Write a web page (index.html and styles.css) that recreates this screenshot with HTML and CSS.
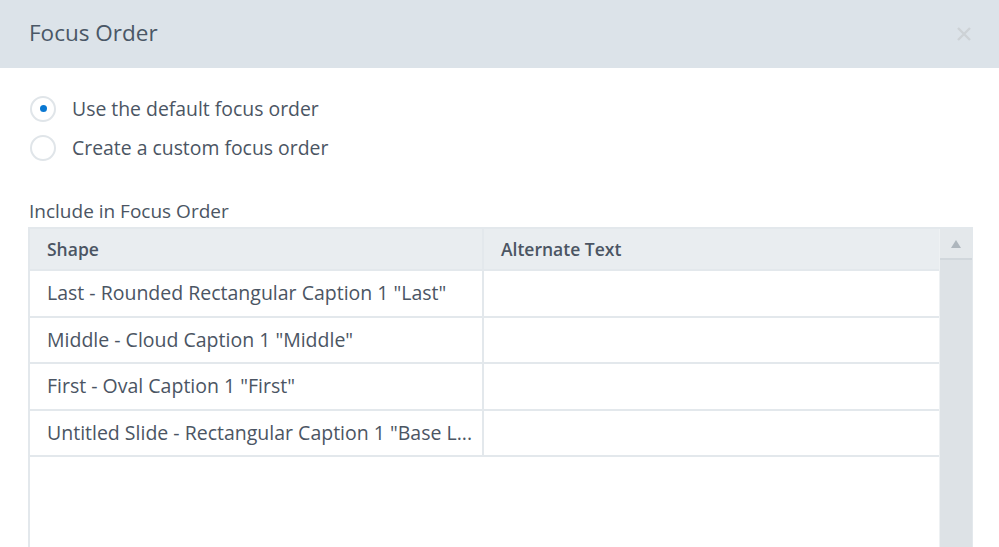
FILE: index.html
```html
<!DOCTYPE html>
<html lang="en">

<head>
    <meta charset="UTF-8">
    <meta name="viewport" content="width=device-width, initial-scale=1.0">
    <title>Focus Order</title>
    <link rel="stylesheet" href="styles.css">
</head>

<body>
    <div class="dialog">
        <div class="head">
            <h1 class="title">Focus Order</h1>
            <svg class="close" width="14" height="14" viewBox="0 0 14 14">
                <path d="M1 1L13 13M13 1L1 13" stroke="#cdd2d6" stroke-width="2.4" fill="none" />
            </svg>
        </div>

        <div class="content">
            <ul class="options">
                <li class="option">
                    <span class="radio checked"></span>
                    <span>Use the default focus order</span>
                </li>
                <li class="option">
                    <span class="radio"></span>
                    <span>Create a custom focus order</span>
                </li>
            </ul>

            <p class="label">Include in Focus Order</p>

            <div class="grid">
                <div class="rows">
                    <div class="row head-row">
                        <div class="cell shape">Shape</div>
                        <div class="cell alt">Alternate Text</div>
                    </div>
                    <div class="row">
                        <div class="cell shape">Last - Rounded Rectangular Caption 1 "Last"</div>
                        <div class="cell alt"></div>
                    </div>
                    <div class="row">
                        <div class="cell shape">Middle - Cloud Caption 1 "Middle"</div>
                        <div class="cell alt"></div>
                    </div>
                    <div class="row">
                        <div class="cell shape">First - Oval Caption 1 "First"</div>
                        <div class="cell alt"></div>
                    </div>
                    <div class="row">
                        <div class="cell shape">Untitled Slide - Rectangular Caption 1 "Base L...</div>
                        <div class="cell alt"></div>
                    </div>
                </div>
                <div class="scrollbar">
                    <div class="arrow"></div>
                </div>
            </div>
        </div>
    </div>
</body>

</html>
```

FILE: styles.css
```css
* {
    margin: 0;
    padding: 0;
    list-style: none;
    box-sizing: border-box;
}

body {
    font-family: "Open Sans", "Noto Sans", sans-serif;
    color: #4b5563;
    background: #fff;
    overflow: hidden;
}

.dialog {
    width: 999px;
    height: 547px;
}

.head {
    height: 68px;
    background-color: #dce3e9;
    display: flex;
    align-items: center;
    justify-content: space-between;
    padding: 0 28px 0 29px;
}

.title {
    font-size: 22.5px;
    font-weight: normal;
    color: #4a5766;
    line-height: 30px;
    margin-top: -2px;
}

.close {
    margin-top: -1px;
}

.content {
    padding: 21px 26px 0 28px;
}

.option {
    display: flex;
    align-items: center;
    height: 39px;
    font-size: 19.4px;
    color: #4b5563;
}

.radio {
    width: 26px;
    height: 26px;
    border: 2px solid #e0e5e9;
    border-radius: 50%;
    margin: 0 16px 0 2px;
    display: flex;
    align-items: center;
    justify-content: center;
}

.radio.checked::after {
    content: "";
    width: 7px;
    height: 7px;
    border-radius: 50%;
    background-color: #0a78d2;
}

.label {
    margin-top: 31px;
    font-size: 19px;
    padding-left: 1px;
    line-height: 26px;
    margin-bottom: 3px;
}

.grid {
    display: flex;
    width: 945px;
    height: 330px;
    border: 2px solid #e3e8ec;
    border-right-width: 1px;
}

.rows {
    flex: 1;
}

.row {
    display: flex;
    height: 46.5px;
    border-bottom: 2px solid #e3e8ec;
}

.head-row {
    height: 42px;
    background-color: #e9edf0;
    font-weight: 600;
}

.cell {
    padding-left: 17px;
    font-size: 19.5px;
    white-space: nowrap;
    line-height: 44px;
}

.head-row .cell {
    font-size: 17.5px;
    line-height: 40px;
}

.cell.shape {
    width: 454px;
    border-right: 2px solid #e3e8ec;
}

.cell.alt {
    flex: 1;
}

.scrollbar {
    width: 33px;
    background-color: #dde2e6;
    border-left: 1px solid #eef1f3;
}

.arrow {
    height: 31px;
    border-bottom: 2px solid #d1d7dc;
    background-color: #e4e8eb;
    display: flex;
    align-items: center;
    justify-content: center;
}

.arrow::after {
    content: "";
    border-left: 5px solid transparent;
    border-right: 5px solid transparent;
    border-bottom: 8px solid #aeb6bd;
}
```
